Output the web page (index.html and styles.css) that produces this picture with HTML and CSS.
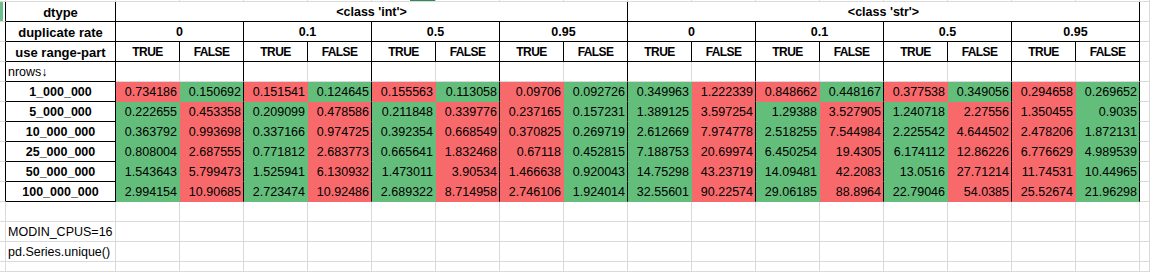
FILE: index.html
```html
<!DOCTYPE html>
<html>
<head>
<meta charset="utf-8">
<link rel="stylesheet" href="styles.css">
</head>
<body>
<div class="sheet">
  <!-- row 0: top strip -->
  <div class="c"></div><div class="c"></div>
  <div class="c"></div><div class="c"></div><div class="c"></div><div class="c"></div><div class="c mark"></div><div class="c"></div><div class="c"></div><div class="c"></div>
  <div class="c"></div><div class="c"></div><div class="c"></div><div class="c"></div><div class="c"></div><div class="c"></div><div class="c"></div><div class="c"></div>
  <div class="c"></div>

  <!-- row 1 -->
  <div class="c br sel"></div>
  <div class="c br bb lab">dtype</div>
  <div class="c br bb hd s8">&lt;class 'int'&gt;</div>
  <div class="c br bb hd s8">&lt;class 'str'&gt;</div>
  <div class="c"></div>

  <!-- row 2 -->
  <div class="c br"></div>
  <div class="c br bb lab">duplicate rate</div>
  <div class="c br bb hd s2">0</div>
  <div class="c br bb hd s2">0.1</div>
  <div class="c br bb hd s2">0.5</div>
  <div class="c br bb hd s2">0.95</div>
  <div class="c br bb hd s2">0</div>
  <div class="c br bb hd s2">0.1</div>
  <div class="c br bb hd s2">0.5</div>
  <div class="c br bb hd s2">0.95</div>
  <div class="c"></div>

  <!-- row 3 -->
  <div class="c br"></div>
  <div class="c br bb lab">use range-part</div>
  <div class="c br bb hd tf">TRUE</div><div class="c br bb hd tf">FALSE</div>
  <div class="c br bb hd tf">TRUE</div><div class="c br bb hd tf">FALSE</div>
  <div class="c br bb hd tf">TRUE</div><div class="c br bb hd tf">FALSE</div>
  <div class="c br bb hd tf">TRUE</div><div class="c br bb hd tf">FALSE</div>
  <div class="c br bb hd tf">TRUE</div><div class="c br bb hd tf">FALSE</div>
  <div class="c br bb hd tf">TRUE</div><div class="c br bb hd tf">FALSE</div>
  <div class="c br bb hd tf">TRUE</div><div class="c br bb hd tf">FALSE</div>
  <div class="c br bb hd tf">TRUE</div><div class="c br bb hd tf">FALSE</div>
  <div class="c"></div>

  <!-- row 4 -->
  <div class="c br"></div>
  <div class="c br bb lt">nrows↓</div>
  <div class="c"></div><div class="c br"></div>
  <div class="c"></div><div class="c br"></div>
  <div class="c"></div><div class="c br"></div>
  <div class="c"></div><div class="c br"></div>
  <div class="c"></div><div class="c br"></div>
  <div class="c"></div><div class="c br"></div>
  <div class="c"></div><div class="c br"></div>
  <div class="c"></div><div class="c br"></div>
  <div class="c"></div>

  <!-- data row 1_000_000 -->
  <div class="c br"></div>
  <div class="c br bb rl">1_000_000</div>
  <div class="c num red">0.734186</div><div class="c num grn br">0.150692</div>
  <div class="c num red">0.151541</div><div class="c num grn br">0.124645</div>
  <div class="c num red">0.155563</div><div class="c num grn br">0.113058</div>
  <div class="c num red">0.09706</div><div class="c num grn br">0.092726</div>
  <div class="c num grn">0.349963</div><div class="c num red br">1.222339</div>
  <div class="c num red">0.848662</div><div class="c num grn br">0.448167</div>
  <div class="c num red">0.377538</div><div class="c num grn br">0.349056</div>
  <div class="c num red">0.294658</div><div class="c num grn br">0.269652</div>
  <div class="c"></div>

  <!-- data row 5_000_000 -->
  <div class="c br"></div>
  <div class="c br bb rl">5_000_000</div>
  <div class="c num grn">0.222655</div><div class="c num red br">0.453358</div>
  <div class="c num grn">0.209099</div><div class="c num red br">0.478586</div>
  <div class="c num grn">0.211848</div><div class="c num red br">0.339776</div>
  <div class="c num red">0.237165</div><div class="c num grn br">0.157231</div>
  <div class="c num grn">1.389125</div><div class="c num red br">3.597254</div>
  <div class="c num grn">1.29388</div><div class="c num red br">3.527905</div>
  <div class="c num grn">1.240718</div><div class="c num red br">2.27556</div>
  <div class="c num red">1.350455</div><div class="c num grn br">0.9035</div>
  <div class="c"></div>

  <!-- data row 10_000_000 -->
  <div class="c br"></div>
  <div class="c br bb rl">10_000_000</div>
  <div class="c num grn">0.363792</div><div class="c num red br">0.993698</div>
  <div class="c num grn">0.337166</div><div class="c num red br">0.974725</div>
  <div class="c num grn">0.392354</div><div class="c num red br">0.668549</div>
  <div class="c num red">0.370825</div><div class="c num grn br">0.269719</div>
  <div class="c num grn">2.612669</div><div class="c num red br">7.974778</div>
  <div class="c num grn">2.518255</div><div class="c num red br">7.544984</div>
  <div class="c num grn">2.225542</div><div class="c num red br">4.644502</div>
  <div class="c num red">2.478206</div><div class="c num grn br">1.872131</div>
  <div class="c"></div>

  <!-- data row 25_000_000 -->
  <div class="c br"></div>
  <div class="c br bb rl">25_000_000</div>
  <div class="c num grn">0.808004</div><div class="c num red br">2.687555</div>
  <div class="c num grn">0.771812</div><div class="c num red br">2.683773</div>
  <div class="c num grn">0.665641</div><div class="c num red br">1.832468</div>
  <div class="c num red">0.67118</div><div class="c num grn br">0.452815</div>
  <div class="c num grn">7.188753</div><div class="c num red br">20.69974</div>
  <div class="c num grn">6.450254</div><div class="c num red br">19.4305</div>
  <div class="c num grn">6.174112</div><div class="c num red br">12.86226</div>
  <div class="c num red">6.776629</div><div class="c num grn br">4.989539</div>
  <div class="c"></div>

  <!-- data row 50_000_000 -->
  <div class="c br"></div>
  <div class="c br bb rl">50_000_000</div>
  <div class="c num grn">1.543643</div><div class="c num red br">5.799473</div>
  <div class="c num grn">1.525941</div><div class="c num red br">6.130932</div>
  <div class="c num grn">1.473011</div><div class="c num red br">3.90534</div>
  <div class="c num red">1.466638</div><div class="c num grn br">0.920043</div>
  <div class="c num grn">14.75298</div><div class="c num red br">43.23719</div>
  <div class="c num grn">14.09481</div><div class="c num red br">42.2083</div>
  <div class="c num grn">13.0516</div><div class="c num red br">27.71214</div>
  <div class="c num red">11.74531</div><div class="c num grn br">10.44965</div>
  <div class="c"></div>

  <!-- data row 100_000_000 -->
  <div class="c br"></div>
  <div class="c br bb rl">100_000_000</div>
  <div class="c num grn">2.994154</div><div class="c num red br">10.90685</div>
  <div class="c num grn">2.723474</div><div class="c num red br">10.92486</div>
  <div class="c num grn">2.689322</div><div class="c num red br">8.714958</div>
  <div class="c num red">2.746106</div><div class="c num grn br">1.924014</div>
  <div class="c num grn">32.55601</div><div class="c num red br">90.22574</div>
  <div class="c num grn">29.06185</div><div class="c num red br">88.8964</div>
  <div class="c num grn">22.79046</div><div class="c num red br">54.0385</div>
  <div class="c num red">25.52674</div><div class="c num grn br">21.96298</div>
  <div class="c"></div>

  <!-- empty row -->
  <div class="c"></div><div class="c"></div>
  <div class="c"></div><div class="c"></div><div class="c"></div><div class="c"></div><div class="c"></div><div class="c"></div><div class="c"></div><div class="c"></div>
  <div class="c"></div><div class="c"></div><div class="c"></div><div class="c"></div><div class="c"></div><div class="c"></div><div class="c"></div><div class="c"></div>
  <div class="c"></div>

  <!-- MODIN_CPUS -->
  <div class="c"></div><div class="c lt">MODIN_CPUS=16</div>
  <div class="c"></div><div class="c"></div><div class="c"></div><div class="c"></div><div class="c"></div><div class="c"></div><div class="c"></div><div class="c"></div>
  <div class="c"></div><div class="c"></div><div class="c"></div><div class="c"></div><div class="c"></div><div class="c"></div><div class="c"></div><div class="c"></div>
  <div class="c"></div>

  <!-- pd.Series.unique() -->
  <div class="c"></div><div class="c lt">pd.Series.unique()</div>
  <div class="c"></div><div class="c"></div><div class="c"></div><div class="c"></div><div class="c"></div><div class="c"></div><div class="c"></div><div class="c"></div>
  <div class="c"></div><div class="c"></div><div class="c"></div><div class="c"></div><div class="c"></div><div class="c"></div><div class="c"></div><div class="c"></div>
  <div class="c"></div>

  <!-- last partial row -->
  <div class="c"></div><div class="c"></div>
  <div class="c"></div><div class="c"></div><div class="c"></div><div class="c"></div><div class="c"></div><div class="c"></div><div class="c"></div><div class="c"></div>
  <div class="c"></div><div class="c"></div><div class="c"></div><div class="c"></div><div class="c"></div><div class="c"></div><div class="c"></div><div class="c"></div>
  <div class="c"></div>
</div>
</body>
</html>
```

FILE: styles.css
```css
html, body {
  margin: 0;
  padding: 0;
  background: #ffffff;
}

.sheet {
  display: grid;
  grid-template-columns: 6px 110px repeat(16, 64px) 10px;
  grid-template-rows: 2px repeat(13, 20px) 10px;
  width: 1150px;
  height: 272px;
  overflow: hidden;
  font-family: "Liberation Sans", Arial, sans-serif;
  font-size: 12.5px;
  color: #000000;
}

.c {
  box-sizing: border-box;
  border-right: 1px solid #dadada;
  border-bottom: 1px solid #dadada;
  background: #ffffff;
  white-space: nowrap;
  overflow: hidden;
  min-width: 0;
  min-height: 0;
}

.lab,
.hd,
.rl,
.lt,
.num {
  padding-top: 2px;
  line-height: 17px;
}

.lab {
  font-weight: bold;
  font-size: 13px;
  text-align: center;
}

.hd {
  font-weight: bold;
  text-align: center;
}

.tf {
  font-size: 12px;
  letter-spacing: -0.6px;
}

.rl {
  font-weight: bold;
  text-align: center;
}

.lt {
  padding-left: 2px;
  text-align: left;
}

.num {
  text-align: right;
  padding-right: 2px;
}

.s2 {
  grid-column: span 2;
}

.s8 {
  grid-column: span 8;
}

.red {
  background: #f8696b;
  border-right-color: #f8696b;
  border-bottom-color: #f8696b;
}

.grn {
  background: #63be7b;
  border-right-color: #63be7b;
  border-bottom-color: #63be7b;
}

.br {
  border-right-color: #000000;
}

.bb {
  border-bottom-color: #000000;
}

.sel {
  box-shadow: inset 3px 0 0 #6cbf8c;
}

.mark {
  background: linear-gradient(to right, #ffffff 38px, #2e8b57 38px);
}
```
